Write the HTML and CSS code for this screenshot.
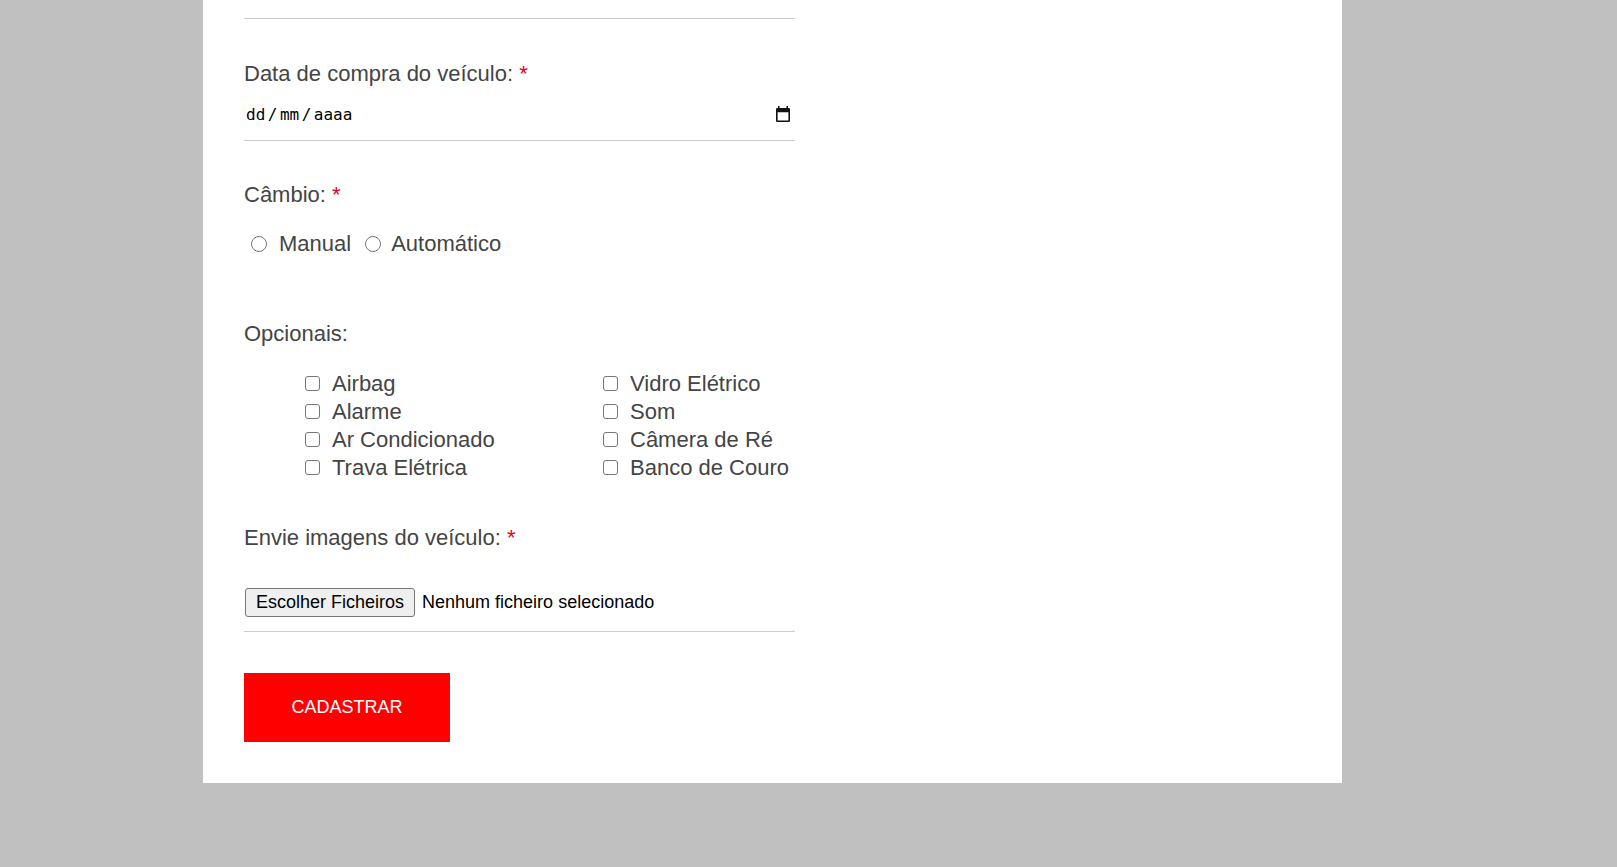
FILE: index.html
```html
<!DOCTYPE html>
<html lang="pt">
<head>
<meta charset="utf-8">
<title>Cadastro de veículo</title>
<link rel="stylesheet" href="styles.css">
</head>
<body>
<main class="panel">
  <form class="form">
    <div class="prev-field"></div>

    <div class="label">Data de compra do veículo: <span class="req">*</span></div>
    <div class="date-input">
      <span class="date-text"><span>dd</span><span class="sep">/</span><span>mm</span><span class="sep">/</span><span>aaaa</span></span>
      <svg class="cal" width="14" height="16" viewBox="0 0 14 16" aria-hidden="true">
        <path fill="#111" fill-rule="evenodd" d="M2 0h1.5v2h7V0H12v2h0.8A1.2 1.2 0 0 1 14 3.2v11.6A1.2 1.2 0 0 1 12.8 16H1.2A1.2 1.2 0 0 1 0 14.8V3.2A1.2 1.2 0 0 1 1.2 2H2z M1.6 6.2v8.2h10.8V6.2z"/>
      </svg>
    </div>

    <div class="label label-cambio">Câmbio: <span class="req">*</span></div>
    <div class="radio-row">
      <label class="choice"><input class="radio" type="radio" name="cambio">Manual</label>
      <label class="choice"><input class="radio" type="radio" name="cambio">Automático</label>
    </div>

    <div class="label label-opc">Opcionais:</div>
    <div class="opts">
      <label class="opt"><input class="check" type="checkbox">Airbag</label>
      <label class="opt"><input class="check" type="checkbox">Alarme</label>
      <label class="opt"><input class="check" type="checkbox">Ar Condicionado</label>
      <label class="opt"><input class="check" type="checkbox">Trava Elétrica</label>
      <label class="opt"><input class="check" type="checkbox">Vidro Elétrico</label>
      <label class="opt"><input class="check" type="checkbox">Som</label>
      <label class="opt"><input class="check" type="checkbox">Câmera de Ré</label>
      <label class="opt"><input class="check" type="checkbox">Banco de Couro</label>
    </div>

    <div class="label label-env">Envie imagens do veículo: <span class="req">*</span></div>
    <div class="file-row">
      <span class="file-btn">Escolher Ficheiros</span>
      <span class="file-name">Nenhum ficheiro selecionado</span>
    </div>

    <button class="submit" type="button">CADASTRAR</button>
  </form>
</main>
</body>
</html>
```

FILE: styles.css
```css
html, body {
  margin: 0;
  padding: 0;
}

body {
  background: #c0c0c0;
  font-family: "Liberation Sans", Arial, sans-serif;
}

.panel {
  margin-left: 203px;
  width: 1139px;
  box-sizing: border-box;
  background: #fff;
  padding: 0 0 41px 41px;
}

.form {
  width: 551px;
  display: flex;
  flex-direction: column;
}

.prev-field {
  height: 18px;
  border-bottom: 1px solid #cccccc;
}

.label {
  font-size: 22px;
  line-height: 25px;
  color: #444;
  margin-top: 42px;
}

.label-cambio {
  margin-top: 41px;
}

.label-opc {
  margin-top: 65px;
}

.label-env {
  margin-top: 43px;
}

.req {
  color: #e3001b;
}

.date-input {
  display: flex;
  align-items: center;
  justify-content: space-between;
  height: 18px;
  padding: 19px 5px 17px 2px;
  border-bottom: 1px solid #cccccc;
}

.date-text {
  font-family: "DejaVu Sans Mono", "Liberation Mono", monospace;
  font-size: 16px;
  color: #000;
  display: flex;
}

.sep {
  margin: 0 2.5px;
}

.cal {
  display: block;
}

.radio-row {
  display: flex;
  align-items: center;
  height: 25px;
  margin-top: 24px;
  font-size: 22px;
  color: #444;
}

.choice {
  display: flex;
  align-items: center;
}

.radio {
  appearance: none;
  -webkit-appearance: none;
  box-sizing: border-box;
  width: 16px;
  height: 16px;
  border: 1px solid #767676;
  border-radius: 50%;
  background: #fff;
  margin: 0 12px 0 7px;
}

.choice + .choice {
  margin-left: 14px;
}

.choice + .choice .radio {
  margin: 0 10px 0 0;
}

.opts {
  display: grid;
  grid-template-columns: 298px 298px;
  grid-template-rows: repeat(4, 28px);
  grid-auto-flow: column;
  margin: 24px 0 0 61px;
}

.opt {
  display: flex;
  align-items: center;
  font-size: 22px;
  color: #444;
}

.check {
  appearance: none;
  -webkit-appearance: none;
  box-sizing: border-box;
  width: 15px;
  height: 15px;
  border: 1px solid #767676;
  border-radius: 3px;
  background: #fff;
  margin: 0 12px 2px 0;
}

.file-row {
  display: flex;
  align-items: center;
  padding: 38px 0 14px 1px;
  border-bottom: 1px solid #cccccc;
  font-size: 18px;
  color: #000;
}

.file-btn {
  display: flex;
  align-items: center;
  height: 29px;
  box-sizing: border-box;
  padding: 0 10px;
  border: 1px solid #767676;
  border-radius: 3px;
  background: #efefef;
}

.file-name {
  margin-left: 7px;
}

.submit {
  align-self: flex-start;
  margin-top: 41px;
  width: 206px;
  height: 69px;
  padding: 0;
  border: 0;
  background: #ff0000;
  color: #fff;
  font-family: "Liberation Sans", Arial, sans-serif;
  font-size: 18px;
}
```
